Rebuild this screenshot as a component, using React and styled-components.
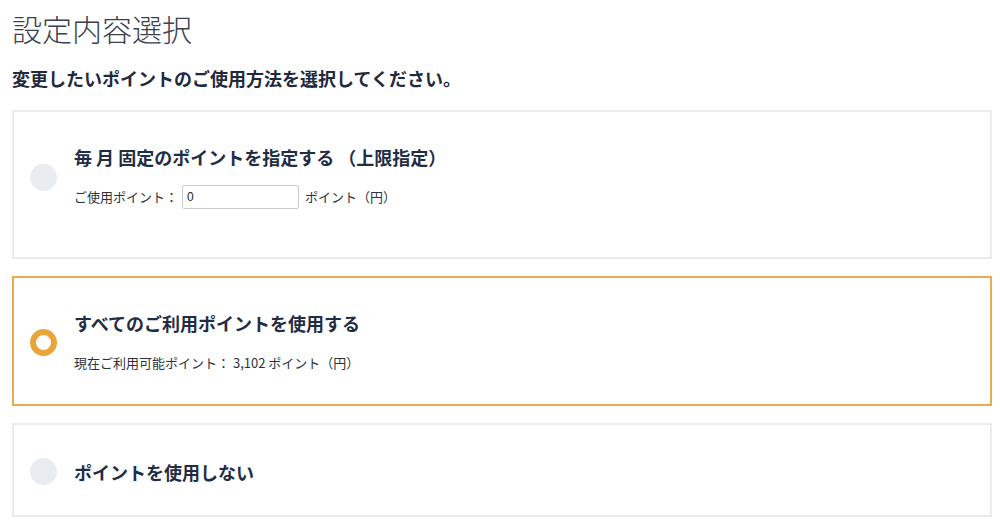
import styled, { createGlobalStyle } from "styled-components"

const GlobalStyle = createGlobalStyle`
    * { box-sizing: border-box; }
    body {
        margin: 0;
        background: #ffffff;
        font-family: "Noto Sans CJK JP", "Noto Sans", sans-serif;
    }
`

const Page = styled.div`
    width: 980px;
    margin-left: 12px;
    padding-top: 10px;
`

const Title = styled.h1`
    margin: 0;
    font-size: 30px;
    line-height: 36px;
    font-weight: 300;
    color: #3a414d;
`

const Lead = styled.p`
    margin: 20px 0 20px;
    font-size: 18px;
    line-height: 24px;
    font-weight: 700;
    color: #1f2a3d;
`

const List = styled.div`
    display: flex;
    flex-direction: column;
    gap: 17px;
`

const Card = styled.label`
    display: flex;
    align-items: center;
    gap: 17px;
    padding: 33px 16px ${props => props.$bottom}px 16px;
    border: 2px solid ${props => props.$active ? "#e8ab4f" : "#ebebeb"};
    background: #ffffff;
    cursor: pointer;
`

const Radio = styled.span`
    flex: none;
    width: 27px;
    height: 27px;
    border-radius: 50%;
    background: ${props => props.$checked ? "#ffffff" : "#e9ecf0"};
    border: ${props => props.$checked ? "6px solid #eba43a" : "none"};
`

const Body = styled.div`
    display: flex;
    flex-direction: column;
`

const Heading = styled.div`
    font-size: 18px;
    line-height: 24px;
    font-weight: 700;
    color: #1f2d45;
`

const Row = styled.div`
    display: flex;
    align-items: center;
    margin-top: ${props => props.$top}px;
    font-size: 13px;
    line-height: 20px;
    color: #2c323b;
`

const PointInput = styled.input`
    width: 117px;
    height: 24px;
    margin: 0 6px 0 4px;
    padding: 0 4px;
    border: 1px solid #c9ccd1;
    border-radius: 2px;
    font-family: "Liberation Sans", "Noto Sans", sans-serif;
    font-size: 12px;
    color: #222;
    outline: none;
`

export default function App() {
    return (
        <>
            <GlobalStyle />
            <Page>
                <Title>設定内容選択</Title>
                <Lead>変更したいポイントのご使用方法を選択してください。</Lead>
                <List>
                    <Card $bottom={48}>
                        <Radio />
                        <Body>
                            <Heading>毎 月 固定のポイントを指定する （上限指定）</Heading>
                            <Row $top={16}>
                                ご使用ポイント：
                                <PointInput defaultValue="0" />
                                ポイント（円）
                            </Row>
                        </Body>
                    </Card>
                    <Card $active $bottom={31}>
                        <Radio $checked />
                        <Body>
                            <Heading>すべてのご利用ポイントを使用する</Heading>
                            <Row $top={18}>現在ご利用可能ポイント： 3,102 ポイント（円）</Row>
                        </Body>
                    </Card>
                    <Card $bottom={30}>
                        <Radio />
                        <Body>
                            <Heading>ポイントを使用しない</Heading>
                        </Body>
                    </Card>
                </List>
            </Page>
        </>
    )
}
